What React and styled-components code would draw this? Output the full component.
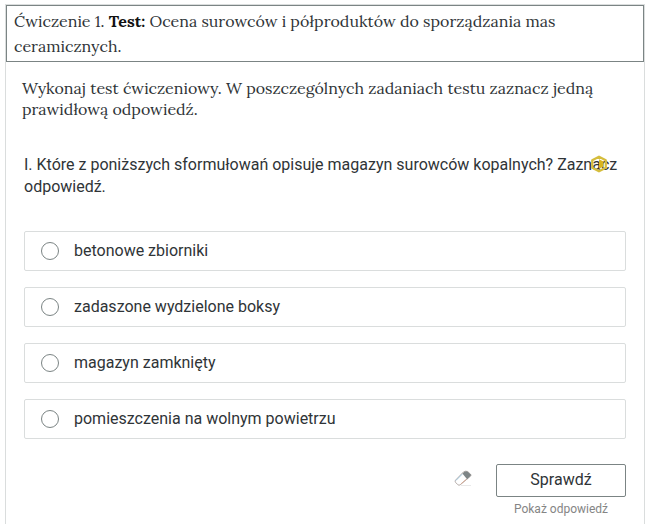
import React, { useState } from "react";
import styled, { createGlobalStyle } from "styled-components";

const GlobalStyle = createGlobalStyle`
  *, *::before, *::after { box-sizing: border-box; }
  body {
    margin: 0;
    background: #fff;
    color: #2f3437;
    font-family: Roboto, "Liberation Sans", sans-serif;
    font-size: 16px;
  }
`;

const Exercise = styled.section`
  margin: 4px 2px 0 5px;
  border: 1px solid #dadddd;
  border-bottom: 0;
  min-height: calc(100vh - 4px);
`;

const Title = styled.h1`
  margin: 0;
  padding: 3px 7px 2px;
  border: 1px solid #7b8484;
  font: 400 16px/25px Lora, "Liberation Serif", serif;

  strong { color: #111; }
`;

const Content = styled.form`
  padding: 16px 18px 0;
`;

const Instruction = styled.p`
  margin: 0 -2px;
  font: 400 16px/21px Lora, "Liberation Serif", serif;
`;

const Question = styled.fieldset`
  margin: 34px 0 0;
  padding: 0;
  border: 0;
  min-width: 0;
`;

const QuestionText = styled.legend`
  position: relative;
  width: 100%;
  padding: 0;
  line-height: 22px;
`;

const Level = styled.svg`
  position: absolute;
  top: 1px;
  right: 18px;
  width: 18px;
  height: 18px;
`;

const Answers = styled.div`
  display: grid;
  gap: 16px;
  margin-top: 33px;
`;

const Answer = styled.label`
  display: flex;
  align-items: center;
  gap: 15px;
  min-height: 40px;
  padding: 0 16px;
  border: 1px solid #dadddd;
  border-radius: 2px;
  line-height: 22px;
  cursor: pointer;
`;

const Radio = styled.input`
  appearance: none;
  flex: none;
  width: 18px;
  height: 18px;
  margin: 0;
  border: 1px solid #7b8484;
  border-radius: 50%;
  background: #fff;

  &:checked { box-shadow: inset 0 0 0 4px #fff; background: #7b8484; }
`;

const Actions = styled.div`
  display: flex;
  justify-content: flex-end;
  align-items: flex-start;
  gap: 24px;
  margin-top: 25px;
`;

const Clear = styled.button`
  padding: 0;
  margin-top: 6px;
  border: 0;
  background: none;
  cursor: pointer;

  svg { display: block; width: 18px; height: 18px; }
`;

const Submit = styled.div`
  display: grid;
  width: 130px;
  gap: 4px;
`;

const Check = styled.button`
  height: 33px;
  padding: 0 0 2px;
  border: 1px solid #7b8484;
  border-radius: 2px;
  background: #fff;
  color: inherit;
  font: inherit;
  cursor: pointer;
`;

const Reveal = styled.button`
  padding: 0;
  border: 0;
  background: none;
  color: #858585;
  font: 400 12px/16px Roboto, "Liberation Sans", sans-serif;
  cursor: pointer;
`;

const options = [
  "betonowe zbiorniki",
  "zadaszone wydzielone boksy",
  "magazyn zamknięty",
  "pomieszczenia na wolnym powietrzu",
];

export default function App() {
  const [selected, setSelected] = useState(null);

  return (
    <>
      <GlobalStyle />
      <Exercise>
        <Title>
          Ćwiczenie 1. <strong>Test:</strong> Ocena surowców i półproduktów do
          sporządzania mas ceramicznych.
        </Title>
        <Content onSubmit={(e) => e.preventDefault()}>
          <Instruction>
            Wykonaj test ćwiczeniowy. W poszczególnych zadaniach testu zaznacz
            jedną prawidłową odpowiedź.
          </Instruction>
          <Question>
            <QuestionText>
              I. Które z poniższych sformułowań opisuje magazyn surowców
              kopalnych? Zaznacz odpowiedź.
              <Level viewBox="0 0 18 18" aria-hidden="true">
                <path
                  d="M9 1.7 15.8 5.3v7.4L9 16.3 2.2 12.7V5.3z"
                  fill="none"
                  stroke="#d5bd3c"
                  strokeWidth="2.2"
                  strokeLinejoin="round"
                />
                <path d="M9 4.2 13.5 6.6v4.8L9 13.8z" fill="#d9b51f" />
              </Level>
            </QuestionText>
            <Answers>
              {options.map((text) => (
                <Answer key={text}>
                  <Radio
                    type="radio"
                    name="answer"
                    checked={selected === text}
                    onChange={() => setSelected(text)}
                  />
                  {text}
                </Answer>
              ))}
            </Answers>
          </Question>
          <Actions>
            <Clear
              type="button"
              aria-label="Wyczyść"
              onClick={() => setSelected(null)}
            >
              <svg viewBox="0 0 18 18">
                <path d="M7 15.5h10" stroke="#e9e9e9" />
                <path
                  d="M9.5 1.9 1.5 10.2Q.8 11.2 1.5 12.3l2.3 2.4q1.1.9 2.3.2L16.6 6.1q.8-.9 0-1.8L13.8 1.6q-2.2-1-4.3.3z"
                  fill="#fff"
                  stroke="#b5aba8"
                />
                <path
                  d="m8.4 3.6 1.8-1.7q1.8-1.1 3.5-.2l2.8 2.6q.8.9 0 1.8l-3.4 3.1z"
                  fill="#7e8586"
                />
                <path d="m1.8 10.6 6.4-6.4" stroke="#9dc3d9" />
                <path d="m6.8 14 5.6-4.7" stroke="#d3a994" />
              </svg>
            </Clear>
            <Submit>
              <Check type="submit">Sprawdź</Check>
              <Reveal type="button">Pokaż odpowiedź</Reveal>
            </Submit>
          </Actions>
        </Content>
      </Exercise>
    </>
  );
}
